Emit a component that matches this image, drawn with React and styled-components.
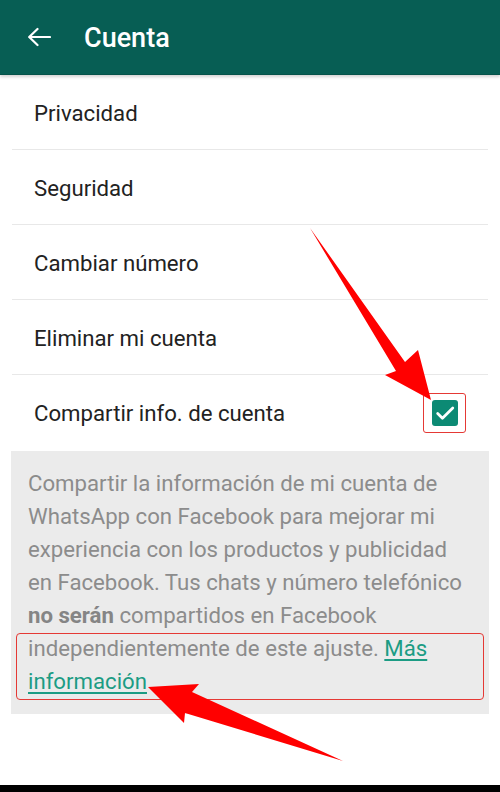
import { createGlobalStyle, styled } from 'styled-components';

const GlobalStyle = createGlobalStyle`
  html, body {
    margin: 0;
    padding: 0;
    background: #ffffff;
  }
  body {
    font-family: Roboto, 'Noto Sans', sans-serif;
  }
`;

const items = ['Privacidad', 'Seguridad', 'Cambiar número', 'Eliminar mi cuenta'];

const App = () => {
  return (
    <>
      <GlobalStyle />
      <Screen>
        <Header>
          <BackButton>
            <svg width="24" height="20" viewBox="0 0 24 20">
              <path d="M23 10H2.5M10.5 2L2.2 10l8.3 8" fill="none" stroke="#ffffff" strokeWidth="2.2" strokeLinecap="round" strokeLinejoin="round" />
            </svg>
          </BackButton>
          <Title>Cuenta</Title>
        </Header>

        <List>
          {items.map((label) => (
            <Row key={label}>
              <Label>{label}</Label>
            </Row>
          ))}
          <Row last>
            <Label>Compartir info. de cuenta</Label>
            <CheckWrap>
              <Checkbox>
                <svg width="22" height="22" viewBox="0 0 24 24">
                  <path d="M4 12.5l5.2 5.2L20.5 6.5" fill="none" stroke="#ffffff" strokeWidth="3" strokeLinecap="round" strokeLinejoin="round" />
                </svg>
              </Checkbox>
              <Highlight />
            </CheckWrap>
          </Row>
        </List>

        <Panel>
          <Description>
            Compartir la información de mi cuenta de<br />
            WhatsApp con Facebook para mejorar mi<br />
            experiencia con los productos y publicidad<br />
            en Facebook. Tus chats y número telefónico<br />
            <Bold>no serán</Bold> compartidos en Facebook<br />
            independientemente de este ajuste. <Link>Más</Link><br />
            <Link>información</Link>
          </Description>
          <TextHighlight />
        </Panel>

        <Spacer />
        <BottomBar />

        <Arrows width="500" height="792" viewBox="0 0 500 792">
          <polygon points="310,228 405,362 418,350 431,400 385,375 396,371" fill="#ff0000" />
          <polygon points="148,687 199,684 192,692 343,761 185,713 184,723" fill="#ff0000" />
        </Arrows>
      </Screen>
    </>
  );
};

const Screen = styled.div`
  position: relative;
  width: 500px;
  height: 792px;
  display: flex;
  flex-direction: column;
  overflow: hidden;
  background: #ffffff;
`;

const Header = styled.div`
  height: 74px;
  flex-shrink: 0;
  display: flex;
  align-items: center;
  background: #075e54;
  border-bottom: 1px solid #05534a;
  box-shadow: 0 2px 3px rgba(0, 0, 0, 0.18);
  position: relative;
  z-index: 1;
`;

const BackButton = styled.div`
  width: 24px;
  height: 20px;
  margin-left: 27px;
  margin-top: -1px;
  display: flex;
`;

const Title = styled.div`
  margin-left: 33px;
  color: #ffffff;
  font-size: 27px;
  font-weight: 500;
  margin-top: 1px;
`;

const List = styled.div`
  display: flex;
  flex-direction: column;
`;

const Row = styled.div`
  height: 75px;
  margin: 0 12px;
  padding: 0 22px;
  box-sizing: border-box;
  display: flex;
  align-items: center;
  justify-content: space-between;
  border-bottom: ${(p) => (p.last ? 'none' : '1px solid #e8e8e8')};
`;

const Label = styled.div`
  font-size: 22.2px;
  color: #222222;
  margin-top: 1px;
`;

const CheckWrap = styled.div`
  position: relative;
  margin-right: 8px;
  margin-top: 1px;
`;

const Checkbox = styled.div`
  width: 26px;
  height: 26px;
  border-radius: 3px;
  background: #0c8a74;
  display: flex;
  align-items: center;
  justify-content: center;
`;

const Highlight = styled.div`
  position: absolute;
  left: -9px;
  top: -7px;
  width: 43px;
  height: 40px;
  box-sizing: border-box;
  border: 1.5px solid #e53935;
  border-radius: 3px;
`;

const Panel = styled.div`
  position: relative;
  margin: 1px 11px 0;
  padding: 16px 17px;
  background: #ebebeb;
`;

const Description = styled.div`
  font-size: 22.2px;
  line-height: 33px;
  color: #8c8c8c;
  white-space: nowrap;
`;

const Bold = styled.b`
  font-weight: 700;
  color: #858585;
`;

const Link = styled.span`
  color: #1c9c84;
  text-decoration: underline;
  text-underline-offset: 3px;
`;

const TextHighlight = styled.div`
  position: absolute;
  left: 5px;
  right: 5px;
  top: 182px;
  height: 67px;
  box-sizing: border-box;
  border: 1.5px solid #e53935;
  border-radius: 4px;
`;

const Spacer = styled.div`
  flex: 1;
`;

const BottomBar = styled.div`
  height: 7px;
  background: #000000;
`;

const Arrows = styled.svg`
  position: absolute;
  left: 0;
  top: 0;
  pointer-events: none;
  z-index: 2;
`;

export default App;
